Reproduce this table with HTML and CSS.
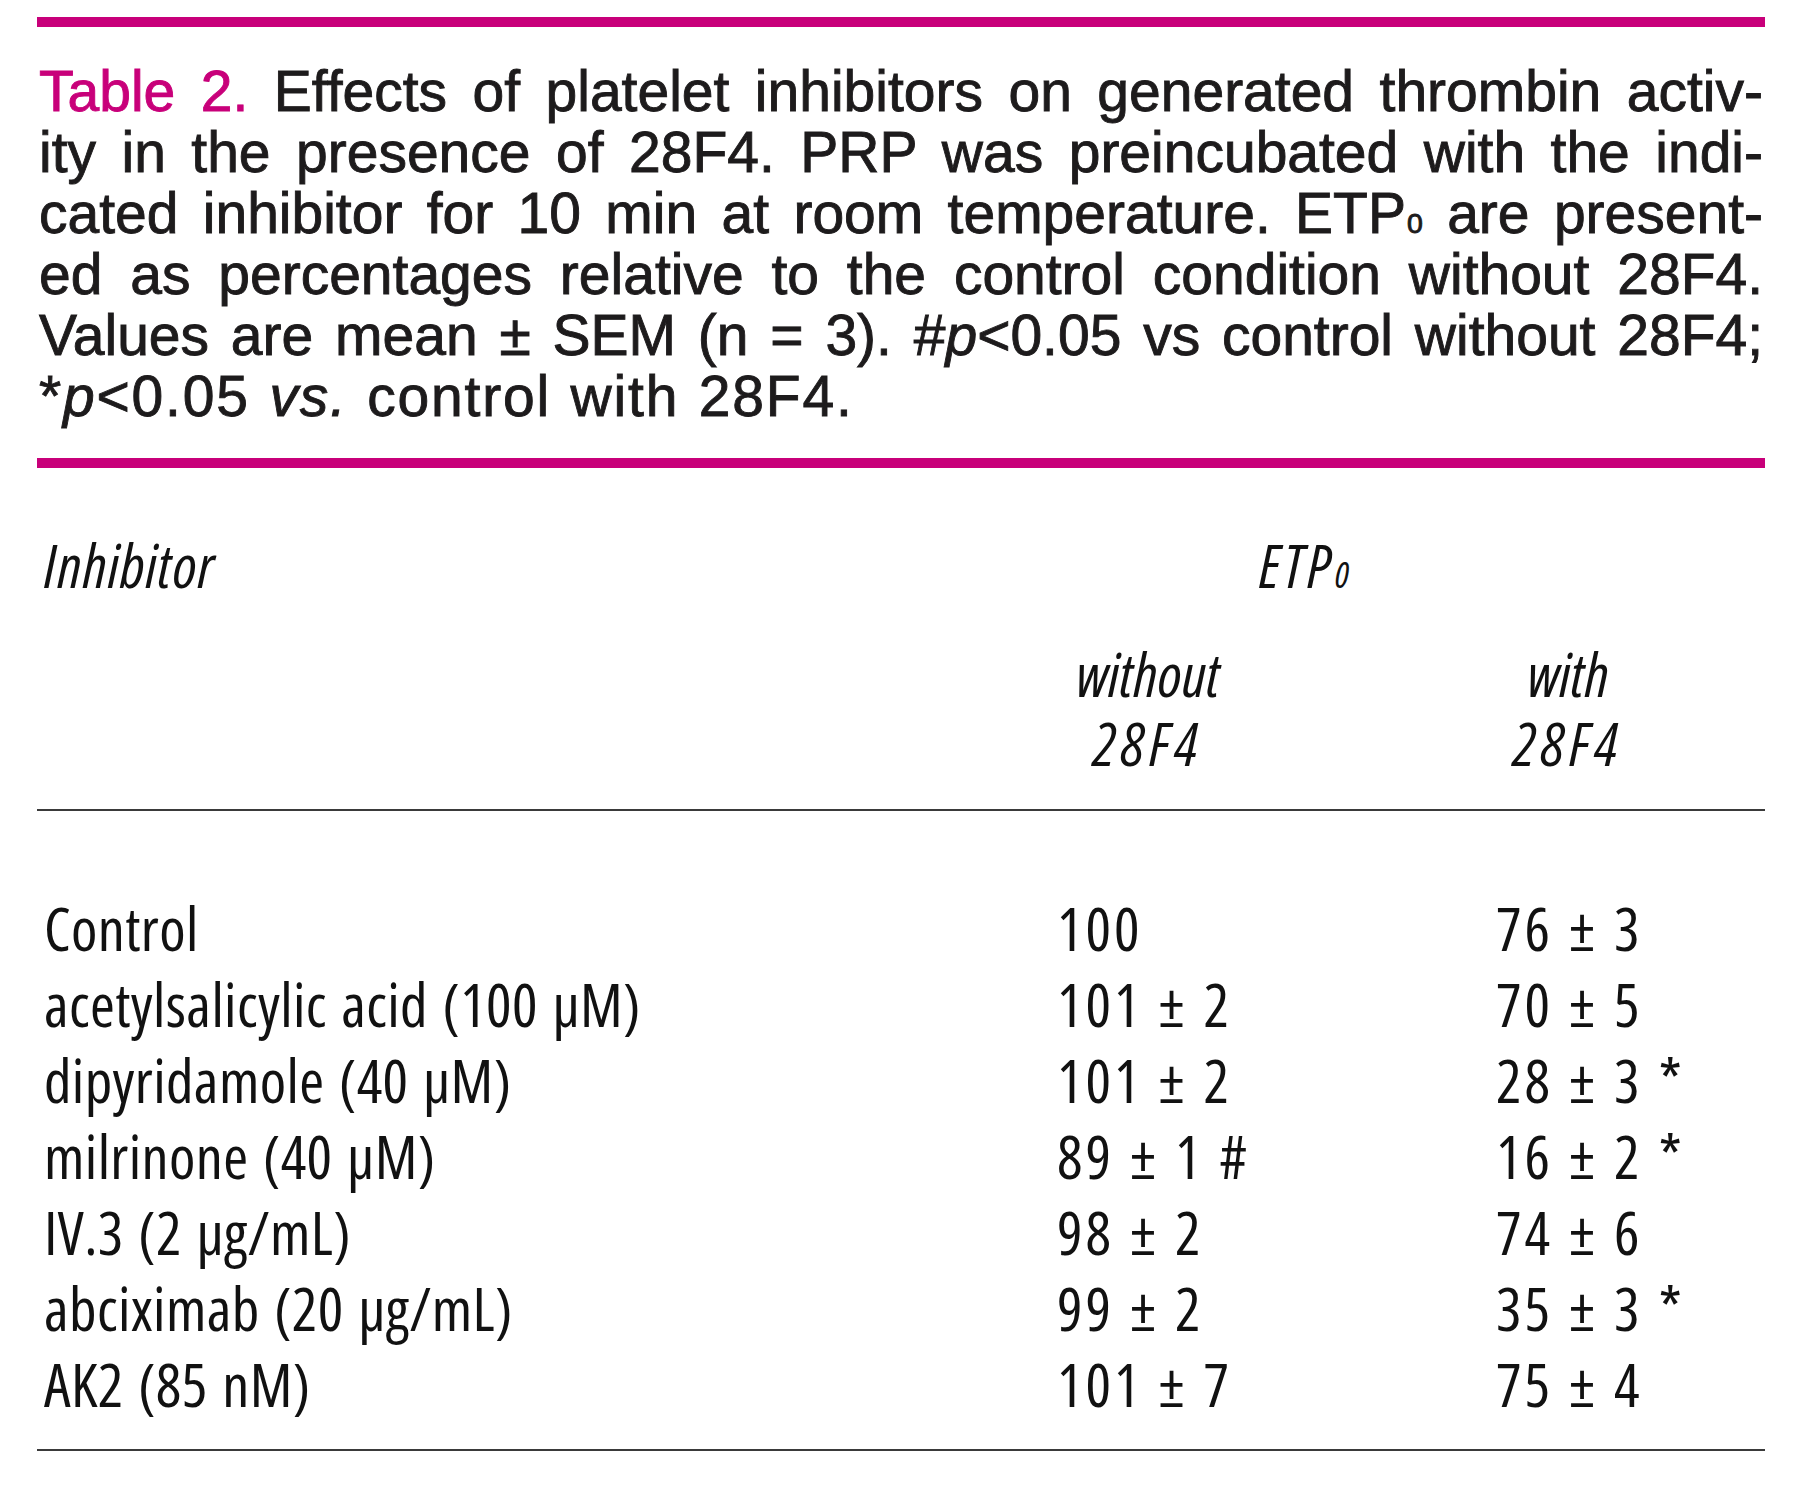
FILE: index.html
```html
<!DOCTYPE html>
<html lang="en">
<head>
<meta charset="utf-8">
<title>Table 2</title>
<link rel="stylesheet" href="styles.css">
</head>
<body>
<div class="page">
  <div class="bar"></div>
  <div class="caption">
    <div class="ln"><span class="lbl">Table 2.</span> Effects of platelet inhibitors on generated thrombin activ-</div>
    <div class="ln">ity in the presence of 28F4. PRP was preincubated with the indi-</div>
    <div class="ln">cated inhibitor for 10 min at room temperature. ETP<span class="sub">0</span> are present-</div>
    <div class="ln">ed as percentages relative to the control condition without 28F4.</div>
    <div class="ln">Values are mean ± SEM (n = 3). #<i>p</i>&lt;0.05 vs control without 28F4;</div>
    <div class="ln last">*<i>p</i>&lt;0.05 <i>vs.</i> control with 28F4.</div>
  </div>
  <div class="bar bar-second"></div>

  <div class="row head-1">
    <div class="cell c1 inh"><i>Inhibitor</i></div>
    <div class="cell etp"><i>ETP<span class="sub">0</span></i></div>
  </div>
  <div class="row head-2">
    <div class="cell c1"></div>
    <div class="cell hb hb-2"><i>without</i><br><i class="num">28F4</i></div>
    <div class="cell hb hb-3"><i>with</i><br><i class="num">28F4</i></div>
  </div>
  <div class="rule rule-mid"></div>

  <div class="row body">
    <div class="cell c1">Control</div><div class="cell c2">100</div><div class="cell c3">76 ± 3</div>
    <div class="cell c1">acetylsalicylic acid (100 µM)</div><div class="cell c2">101 ± 2</div><div class="cell c3">70 ± 5</div>
    <div class="cell c1">dipyridamole (40 µM)</div><div class="cell c2">101 ± 2</div><div class="cell c3">28 ± 3 *</div>
    <div class="cell c1">milrinone (40 µM)</div><div class="cell c2">89 ± 1 #</div><div class="cell c3">16 ± 2 *</div>
    <div class="cell c1">IV.3 (2 µg/mL)</div><div class="cell c2">98 ± 2</div><div class="cell c3">74 ± 6</div>
    <div class="cell c1">abciximab (20 µg/mL)</div><div class="cell c2">99 ± 2</div><div class="cell c3">35 ± 3 *</div>
    <div class="cell c1">AK2 (85 nM)</div><div class="cell c2">101 ± 7</div><div class="cell c3">75 ± 4</div>
  </div>
  <div class="rule rule-bottom"></div>
</div>
</body>
</html>
```
FILE: styles.css
```css
html, body {
  margin: 0;
  padding: 0;
  background: #ffffff;
}

.page {
  width: 1728px;
  padding: 17px 35px 40px 37px;
  color: #1d1b1c;
}

.bar {
  height: 10px;
  background: #c8007a;
}

.bar-second {
  margin-top: 31px;
}

.caption {
  margin-top: 34px;
  padding: 0 2px 0 2px;
  font-family: "Liberation Sans", Arial, sans-serif;
  font-size: 57px;
  line-height: 61px;
  -webkit-text-stroke: 0.9px #1d1b1c;
}

.caption .lbl {
  color: #c8007a;
  -webkit-text-stroke: 0.9px #c8007a;
}

.ln {
  text-align: justify;
  text-align-last: justify;
  white-space: nowrap;
}

.ln.last {
  text-align-last: left;
  letter-spacing: 1.8px;
  word-spacing: 2px;
}

.sub {
  font-size: 0.5em;
  line-height: 1;
  vertical-align: baseline;
  margin-left: 1px;
}

.row {
  display: grid;
  grid-template-columns: 1013px 440px 275px;
  font-family: "Open Sans", "Liberation Sans", sans-serif;
  font-stretch: 75%;
  font-size: 60px;
  color: #111111;
}

.cell {
  white-space: nowrap;
}

.c1 {
  padding-left: 7px;
  word-spacing: 3px;
  letter-spacing: 0.4px;
}

.head-1 {
  margin-top: 59px;
  line-height: 76px;
}

.inh {
  letter-spacing: 0.9px;
}

.etp {
  grid-column: 2 / 4;
  padding-left: 209px;
  letter-spacing: 3px;
}

.etp .sub {
  font-size: 0.6em;
  margin-left: 1px;
  letter-spacing: 0;
}

.head-2 {
  margin-top: 37px;
  line-height: 69px;
}

.hb {
  text-align: center;
}

.hb-2 {
  width: 196px;
}

.hb-3 {
  width: 156px;
}

.num {
  letter-spacing: 5px;
}

.rule {
  height: 2px;
  background: #3a3a3a;
}

.rule-mid {
  margin-top: 31px;
}

.body {
  margin-top: 79px;
  line-height: 76px;
}

.c2 {
  padding-left: 7px;
  letter-spacing: 3px;
  word-spacing: 2px;
}

.c3 {
  padding-left: 6px;
  letter-spacing: 3px;
  word-spacing: 2px;
}

.rule-bottom {
  margin-top: 27px;
}
```
